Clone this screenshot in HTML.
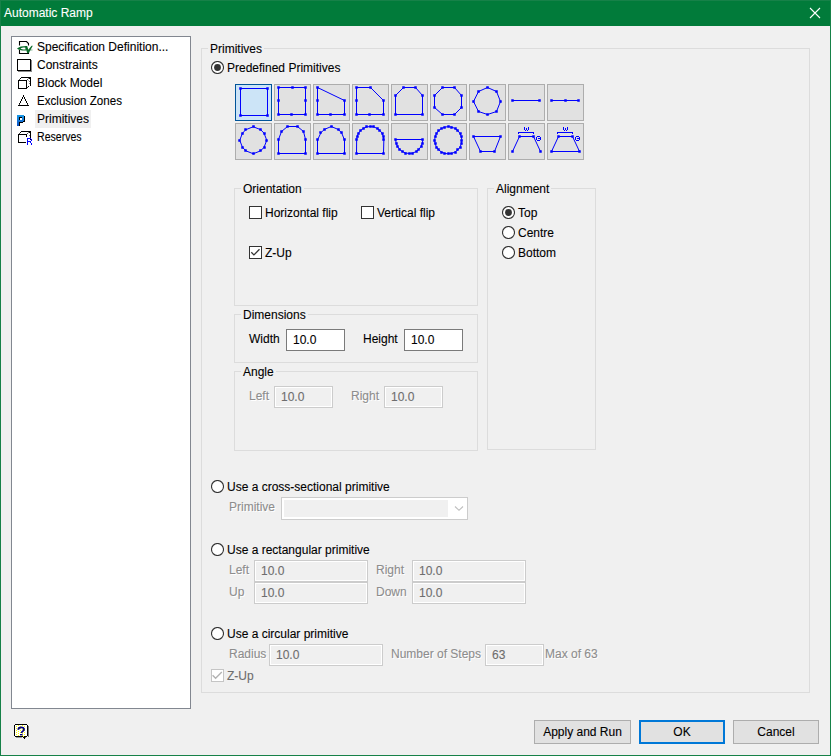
<!DOCTYPE html>
<html><head><meta charset="utf-8">
<style>
*{margin:0;padding:0;box-sizing:border-box}
html,body{width:831px;height:756px;overflow:hidden;background:#f0f0f0}
body{position:relative;font-family:"Liberation Sans",sans-serif;font-size:12px;line-height:12px;color:#000;-webkit-text-stroke:0.1px currentColor}
.a{position:absolute;white-space:nowrap}
#win{position:absolute;left:0;top:0;width:831px;height:756px;border:1px solid #168148;background:#f0f0f0}
#title{position:absolute;left:1px;top:1px;width:829px;height:25px;background:#017b3a}
.gb{position:absolute;border:1px solid #dcdcdc}
.lg{position:absolute;background:#f0f0f0;padding:0 2px;height:12px}
.cb{position:absolute;width:13px;height:13px;border:1px solid #333;background:#fff}
.rb{position:absolute;width:13px;height:13px}
.in{position:absolute;border:1px solid #7a7a7a;background:#fff;height:22px;padding:4px 0 0 6px}
.dis{color:#8d8d8d;text-shadow:1px 1px 0 #fff}
.ind{position:absolute;border:1px solid #cccccc;background:#f0f0f0;box-shadow:inset 0 0 0 1px #fff;height:22px;padding:4px 0 0 6px;color:#6d6d6d}
.btn{position:absolute;border:1px solid #adadad;background:#e1e1e1;height:24px;text-align:center;padding-top:5px}
.pb{position:absolute;width:37px;height:37px;border:1px solid #adadad;background:#e1e1e1}
.pb svg{position:absolute;left:-1px;top:-1px}
.pb.sel{border-color:#005499;background:#cce4f7}
</style></head><body>
<div id="win"></div>
<div id="title"></div>
<div class="a" style="left:4px;top:7px;color:#fff">Automatic Ramp</div>

<!-- sidebar -->
<div style="position:absolute;left:11px;top:36px;width:180px;height:673px;background:#fff;border:1px solid #828790"></div>
<div class="a" style="left:37px;top:41px">Specification Definition...</div>
<div class="a" style="left:37px;top:59px">Constraints</div>
<div class="a" style="left:37px;top:77px">Block Model</div>
<div class="a" style="left:37px;top:95px;transform:scaleX(0.965);transform-origin:0 0">Exclusion Zones</div>
<div style="position:absolute;left:35px;top:110px;width:56px;height:18px;background:#f0f0f0"></div>
<div class="a" style="left:37px;top:113px">Primitives</div>
<div class="a" style="left:37px;top:131px;transform:scaleX(0.88);transform-origin:0 0">Reserves</div>

<!-- primitives group -->
<div class="gb" style="left:201px;top:48px;width:609px;height:645px"></div>
<div class="lg" style="left:208px;top:43px">Primitives</div>
<svg class="rb" style="left:211px;top:61px" width="13" height="13" viewBox="0 0 13 13"><circle cx="6.5" cy="6.5" r="6" fill="#fff" stroke="#333" stroke-width="1.1"/><circle cx="6.5" cy="6.5" r="3.4" fill="#333"/></svg>
<div class="a" style="left:227px;top:62px">Predefined Primitives</div>

<div class="pb sel" style="left:235px;top:84px"><svg width="37" height="37" viewBox="0 0 37 37" style="left:-1px;top:-1px"><g transform="translate(1,1)"><polygon points="4.50,3.50 31.50,3.50 31.50,30.50 4.50,30.50" fill="none" stroke="#0000ff" stroke-width="1"/><rect x="3.25" y="2.25" width="2.5" height="2.5" fill="#0000ff"/><rect x="30.25" y="2.25" width="2.5" height="2.5" fill="#0000ff"/><rect x="30.25" y="29.25" width="2.5" height="2.5" fill="#0000ff"/><rect x="3.25" y="29.25" width="2.5" height="2.5" fill="#0000ff"/></g></svg></div>
<div class="pb" style="left:274px;top:84px"><svg width="37" height="37" viewBox="0 0 37 37" style="left:-1px;top:-1px"><g><polygon points="4.50,3.50 31.50,3.50 31.50,30.50 4.50,30.50" fill="none" stroke="#0000ff" stroke-width="1"/><rect x="3.25" y="2.25" width="2.5" height="2.5" fill="#0000ff"/><rect x="17.25" y="2.25" width="2.5" height="2.5" fill="#0000ff"/><rect x="30.25" y="2.25" width="2.5" height="2.5" fill="#0000ff"/><rect x="30.25" y="15.25" width="2.5" height="2.5" fill="#0000ff"/><rect x="30.25" y="29.25" width="2.5" height="2.5" fill="#0000ff"/><rect x="16.25" y="29.25" width="2.5" height="2.5" fill="#0000ff"/><rect x="3.25" y="29.25" width="2.5" height="2.5" fill="#0000ff"/><rect x="3.25" y="15.25" width="2.5" height="2.5" fill="#0000ff"/></g></svg></div>
<div class="pb" style="left:313px;top:84px"><svg width="37" height="37" viewBox="0 0 37 37" style="left:-1px;top:-1px"><g><polygon points="4.50,3.50 31.50,16.50 31.50,30.50 4.50,30.50" fill="none" stroke="#0000ff" stroke-width="1"/><rect x="3.25" y="2.25" width="2.5" height="2.5" fill="#0000ff"/><rect x="30.25" y="15.25" width="2.5" height="2.5" fill="#0000ff"/><rect x="30.25" y="29.25" width="2.5" height="2.5" fill="#0000ff"/><rect x="16.25" y="29.25" width="2.5" height="2.5" fill="#0000ff"/><rect x="3.25" y="29.25" width="2.5" height="2.5" fill="#0000ff"/><rect x="3.25" y="15.25" width="2.5" height="2.5" fill="#0000ff"/></g></svg></div>
<div class="pb" style="left:352px;top:84px"><svg width="37" height="37" viewBox="0 0 37 37" style="left:-1px;top:-1px"><g><polygon points="4.50,3.50 18.50,3.50 31.50,16.50 31.50,30.50 4.50,30.50" fill="none" stroke="#0000ff" stroke-width="1"/><rect x="3.25" y="2.25" width="2.5" height="2.5" fill="#0000ff"/><rect x="17.25" y="2.25" width="2.5" height="2.5" fill="#0000ff"/><rect x="30.25" y="15.25" width="2.5" height="2.5" fill="#0000ff"/><rect x="30.25" y="29.25" width="2.5" height="2.5" fill="#0000ff"/><rect x="16.25" y="29.25" width="2.5" height="2.5" fill="#0000ff"/><rect x="3.25" y="29.25" width="2.5" height="2.5" fill="#0000ff"/><rect x="3.25" y="15.25" width="2.5" height="2.5" fill="#0000ff"/></g></svg></div>
<div class="pb" style="left:391px;top:84px"><svg width="37" height="37" viewBox="0 0 37 37" style="left:-1px;top:-1px"><g><polygon points="4.50,11.50 12.50,3.50 24.50,3.50 31.50,11.50 31.50,30.50 4.50,30.50" fill="none" stroke="#0000ff" stroke-width="1"/><rect x="3.25" y="10.25" width="2.5" height="2.5" fill="#0000ff"/><rect x="11.25" y="2.25" width="2.5" height="2.5" fill="#0000ff"/><rect x="23.25" y="2.25" width="2.5" height="2.5" fill="#0000ff"/><rect x="30.25" y="10.25" width="2.5" height="2.5" fill="#0000ff"/><rect x="30.25" y="29.25" width="2.5" height="2.5" fill="#0000ff"/><rect x="3.25" y="29.25" width="2.5" height="2.5" fill="#0000ff"/></g></svg></div>
<div class="pb" style="left:430px;top:84px"><svg width="37" height="37" viewBox="0 0 37 37" style="left:-1px;top:-1px"><g><polygon points="12.50,3.50 24.50,3.50 31.50,11.50 31.50,23.50 24.50,30.50 12.50,30.50 4.50,23.50 4.50,11.50" fill="none" stroke="#0000ff" stroke-width="1"/><rect x="11.25" y="2.25" width="2.5" height="2.5" fill="#0000ff"/><rect x="23.25" y="2.25" width="2.5" height="2.5" fill="#0000ff"/><rect x="30.25" y="10.25" width="2.5" height="2.5" fill="#0000ff"/><rect x="30.25" y="22.25" width="2.5" height="2.5" fill="#0000ff"/><rect x="23.25" y="29.25" width="2.5" height="2.5" fill="#0000ff"/><rect x="11.25" y="29.25" width="2.5" height="2.5" fill="#0000ff"/><rect x="3.25" y="22.25" width="2.5" height="2.5" fill="#0000ff"/><rect x="3.25" y="10.25" width="2.5" height="2.5" fill="#0000ff"/></g></svg></div>
<div class="pb" style="left:469px;top:84px"><svg width="37" height="37" viewBox="0 0 37 37" style="left:-1px;top:-1px"><g><polygon points="18.50,3.50 27.50,7.50 31.50,17.50 27.50,27.50 18.50,30.50 9.50,27.50 4.50,17.50 9.50,7.50" fill="none" stroke="#0000ff" stroke-width="1"/><rect x="17.25" y="2.25" width="2.5" height="2.5" fill="#0000ff"/><rect x="26.25" y="6.25" width="2.5" height="2.5" fill="#0000ff"/><rect x="30.25" y="16.25" width="2.5" height="2.5" fill="#0000ff"/><rect x="26.25" y="26.25" width="2.5" height="2.5" fill="#0000ff"/><rect x="17.25" y="29.25" width="2.5" height="2.5" fill="#0000ff"/><rect x="8.25" y="26.25" width="2.5" height="2.5" fill="#0000ff"/><rect x="3.25" y="16.25" width="2.5" height="2.5" fill="#0000ff"/><rect x="8.25" y="6.25" width="2.5" height="2.5" fill="#0000ff"/></g></svg></div>
<div class="pb" style="left:508px;top:84px"><svg width="37" height="37" viewBox="0 0 37 37" style="left:-1px;top:-1px"><g><polyline points="4.50,16.50 31.50,16.50" fill="none" stroke="#0000ff" stroke-width="1"/><rect x="3.25" y="15.25" width="2.5" height="2.5" fill="#0000ff"/><rect x="30.25" y="15.25" width="2.5" height="2.5" fill="#0000ff"/></g></svg></div>
<div class="pb" style="left:547px;top:84px"><svg width="37" height="37" viewBox="0 0 37 37" style="left:-1px;top:-1px"><g><polyline points="4.50,16.50 31.50,16.50" fill="none" stroke="#0000ff" stroke-width="1"/><rect x="3.25" y="15.25" width="2.5" height="2.5" fill="#0000ff"/><rect x="17.25" y="15.25" width="2.5" height="2.5" fill="#0000ff"/><rect x="30.25" y="15.25" width="2.5" height="2.5" fill="#0000ff"/></g></svg></div>
<div class="pb" style="left:235px;top:123px"><svg width="37" height="37" viewBox="0 0 37 37" style="left:-1px;top:-1px"><g><polygon points="31.75,17.25 29.07,10.22 25.65,6.68 18.25,3.75 10.85,6.68 7.43,10.22 4.75,17.25 7.43,24.28 10.85,27.82 18.25,30.75 25.65,27.82 29.07,24.28" fill="none" stroke="#0000ff" stroke-width="1"/><rect x="30.25" y="16.25" width="2.5" height="2.5" fill="#0000ff"/><rect x="28.25" y="9.25" width="2.5" height="2.5" fill="#0000ff"/><rect x="24.25" y="5.25" width="2.5" height="2.5" fill="#0000ff"/><rect x="17.25" y="2.25" width="2.5" height="2.5" fill="#0000ff"/><rect x="9.25" y="5.25" width="2.5" height="2.5" fill="#0000ff"/><rect x="6.25" y="9.25" width="2.5" height="2.5" fill="#0000ff"/><rect x="3.25" y="16.25" width="2.5" height="2.5" fill="#0000ff"/><rect x="6.25" y="23.25" width="2.5" height="2.5" fill="#0000ff"/><rect x="9.25" y="26.25" width="2.5" height="2.5" fill="#0000ff"/><rect x="17.25" y="29.25" width="2.5" height="2.5" fill="#0000ff"/><rect x="24.25" y="26.25" width="2.5" height="2.5" fill="#0000ff"/><rect x="28.25" y="23.25" width="2.5" height="2.5" fill="#0000ff"/></g></svg></div>
<div class="pb" style="left:274px;top:123px"><svg width="37" height="37" viewBox="0 0 37 37" style="left:-1px;top:-1px"><g><polygon points="4.50,30.50 4.50,16.50 7.50,8.50 13.50,3.50 23.50,3.50 29.50,8.50 31.50,16.50 31.50,30.50" fill="none" stroke="#0000ff" stroke-width="1"/><rect x="3.25" y="29.25" width="2.5" height="2.5" fill="#0000ff"/><rect x="3.25" y="15.25" width="2.5" height="2.5" fill="#0000ff"/><rect x="6.25" y="7.25" width="2.5" height="2.5" fill="#0000ff"/><rect x="12.25" y="2.25" width="2.5" height="2.5" fill="#0000ff"/><rect x="22.25" y="2.25" width="2.5" height="2.5" fill="#0000ff"/><rect x="28.25" y="7.25" width="2.5" height="2.5" fill="#0000ff"/><rect x="30.25" y="15.25" width="2.5" height="2.5" fill="#0000ff"/><rect x="30.25" y="29.25" width="2.5" height="2.5" fill="#0000ff"/></g></svg></div>
<div class="pb" style="left:313px;top:123px"><svg width="37" height="37" viewBox="0 0 37 37" style="left:-1px;top:-1px"><g><polygon points="4.50,30.50 4.50,17.00 7.90,9.80 11.20,6.50 18.25,3.50 25.30,6.50 28.60,9.80 31.50,17.00 31.50,30.50" fill="none" stroke="#0000ff" stroke-width="1"/><rect x="3.25" y="29.25" width="2.5" height="2.5" fill="#0000ff"/><rect x="3.25" y="15.25" width="2.5" height="2.5" fill="#0000ff"/><rect x="6.25" y="8.25" width="2.5" height="2.5" fill="#0000ff"/><rect x="10.25" y="5.25" width="2.5" height="2.5" fill="#0000ff"/><rect x="17.25" y="2.25" width="2.5" height="2.5" fill="#0000ff"/><rect x="24.25" y="5.25" width="2.5" height="2.5" fill="#0000ff"/><rect x="27.25" y="8.25" width="2.5" height="2.5" fill="#0000ff"/><rect x="30.25" y="15.25" width="2.5" height="2.5" fill="#0000ff"/><rect x="30.25" y="29.25" width="2.5" height="2.5" fill="#0000ff"/></g></svg></div>
<div class="pb" style="left:352px;top:123px"><svg width="37" height="37" viewBox="0 0 37 37" style="left:-1px;top:-1px"><g><polygon points="4.50,30.50 4.65,17.00 5.11,13.51 6.47,10.25 8.63,7.45 11.45,5.31 14.73,3.96 18.25,3.50 21.77,3.96 25.05,5.31 27.87,7.45 30.03,10.25 31.39,13.51 31.85,17.00 31.50,30.50" fill="none" stroke="#0000ff" stroke-width="1"/><rect x="3.25" y="29.25" width="2.5" height="2.5" fill="#0000ff"/><rect x="3.25" y="15.25" width="2.5" height="2.5" fill="#0000ff"/><rect x="4.25" y="12.25" width="2.5" height="2.5" fill="#0000ff"/><rect x="5.25" y="9.25" width="2.5" height="2.5" fill="#0000ff"/><rect x="7.25" y="6.25" width="2.5" height="2.5" fill="#0000ff"/><rect x="10.25" y="4.25" width="2.5" height="2.5" fill="#0000ff"/><rect x="13.25" y="2.25" width="2.5" height="2.5" fill="#0000ff"/><rect x="17.25" y="2.25" width="2.5" height="2.5" fill="#0000ff"/><rect x="20.25" y="2.25" width="2.5" height="2.5" fill="#0000ff"/><rect x="24.25" y="4.25" width="2.5" height="2.5" fill="#0000ff"/><rect x="26.25" y="6.25" width="2.5" height="2.5" fill="#0000ff"/><rect x="29.25" y="9.25" width="2.5" height="2.5" fill="#0000ff"/><rect x="30.25" y="12.25" width="2.5" height="2.5" fill="#0000ff"/><rect x="30.25" y="15.25" width="2.5" height="2.5" fill="#0000ff"/><rect x="30.25" y="29.25" width="2.5" height="2.5" fill="#0000ff"/></g></svg></div>
<div class="pb" style="left:391px;top:123px"><svg width="37" height="37" viewBox="0 0 37 37" style="left:-1px;top:-1px"><g><polygon points="4.65,16.50 5.11,20.12 6.47,23.50 8.63,26.40 11.45,28.62 14.73,30.02 18.25,30.50 21.77,30.02 25.05,28.62 27.87,26.40 30.03,23.50 31.39,20.12 31.85,16.50" fill="none" stroke="#0000ff" stroke-width="1"/><rect x="3.25" y="15.25" width="2.5" height="2.5" fill="#0000ff"/><rect x="4.25" y="19.25" width="2.5" height="2.5" fill="#0000ff"/><rect x="5.25" y="22.25" width="2.5" height="2.5" fill="#0000ff"/><rect x="7.25" y="25.25" width="2.5" height="2.5" fill="#0000ff"/><rect x="10.25" y="27.25" width="2.5" height="2.5" fill="#0000ff"/><rect x="13.25" y="29.25" width="2.5" height="2.5" fill="#0000ff"/><rect x="17.25" y="29.25" width="2.5" height="2.5" fill="#0000ff"/><rect x="20.25" y="29.25" width="2.5" height="2.5" fill="#0000ff"/><rect x="24.25" y="27.25" width="2.5" height="2.5" fill="#0000ff"/><rect x="26.25" y="25.25" width="2.5" height="2.5" fill="#0000ff"/><rect x="29.25" y="22.25" width="2.5" height="2.5" fill="#0000ff"/><rect x="30.25" y="19.25" width="2.5" height="2.5" fill="#0000ff"/><rect x="30.25" y="15.25" width="2.5" height="2.5" fill="#0000ff"/></g></svg></div>
<div class="pb" style="left:430px;top:123px"><svg width="37" height="37" viewBox="0 0 37 37" style="left:-1px;top:-1px"><g><polygon points="18.25,3.65 21.77,4.11 25.05,5.47 27.87,7.63 30.03,10.45 31.39,13.73 31.85,17.25 31.39,20.77 30.03,24.05 27.87,26.87 25.05,29.03 21.77,30.39 18.25,30.85 14.73,30.39 11.45,29.03 8.63,26.87 6.47,24.05 5.11,20.77 4.65,17.25 5.11,13.73 6.47,10.45 8.63,7.63 11.45,5.47 14.73,4.11" fill="none" stroke="#0000ff" stroke-width="1"/><rect x="17.25" y="2.25" width="2.5" height="2.5" fill="#0000ff"/><rect x="20.25" y="3.25" width="2.5" height="2.5" fill="#0000ff"/><rect x="24.25" y="4.25" width="2.5" height="2.5" fill="#0000ff"/><rect x="26.25" y="6.25" width="2.5" height="2.5" fill="#0000ff"/><rect x="29.25" y="9.25" width="2.5" height="2.5" fill="#0000ff"/><rect x="30.25" y="12.25" width="2.5" height="2.5" fill="#0000ff"/><rect x="30.25" y="16.25" width="2.5" height="2.5" fill="#0000ff"/><rect x="30.25" y="19.25" width="2.5" height="2.5" fill="#0000ff"/><rect x="29.25" y="23.25" width="2.5" height="2.5" fill="#0000ff"/><rect x="26.25" y="25.25" width="2.5" height="2.5" fill="#0000ff"/><rect x="24.25" y="28.25" width="2.5" height="2.5" fill="#0000ff"/><rect x="20.25" y="29.25" width="2.5" height="2.5" fill="#0000ff"/><rect x="17.25" y="29.25" width="2.5" height="2.5" fill="#0000ff"/><rect x="13.25" y="29.25" width="2.5" height="2.5" fill="#0000ff"/><rect x="10.25" y="28.25" width="2.5" height="2.5" fill="#0000ff"/><rect x="7.25" y="25.25" width="2.5" height="2.5" fill="#0000ff"/><rect x="5.25" y="23.25" width="2.5" height="2.5" fill="#0000ff"/><rect x="4.25" y="19.25" width="2.5" height="2.5" fill="#0000ff"/><rect x="3.25" y="16.25" width="2.5" height="2.5" fill="#0000ff"/><rect x="4.25" y="12.25" width="2.5" height="2.5" fill="#0000ff"/><rect x="5.25" y="9.25" width="2.5" height="2.5" fill="#0000ff"/><rect x="7.25" y="6.25" width="2.5" height="2.5" fill="#0000ff"/><rect x="10.25" y="4.25" width="2.5" height="2.5" fill="#0000ff"/><rect x="13.25" y="3.25" width="2.5" height="2.5" fill="#0000ff"/></g></svg></div>
<div class="pb" style="left:469px;top:123px"><svg width="37" height="37" viewBox="0 0 37 37" style="left:-1px;top:-1px"><g><polygon points="4.50,13.50 31.50,13.50 25.50,28.50 11.50,28.50" fill="none" stroke="#0000ff" stroke-width="1"/><rect x="3.25" y="12.25" width="2.5" height="2.5" fill="#0000ff"/><rect x="30.25" y="12.25" width="2.5" height="2.5" fill="#0000ff"/><rect x="24.25" y="27.25" width="2.5" height="2.5" fill="#0000ff"/><rect x="10.25" y="27.25" width="2.5" height="2.5" fill="#0000ff"/></g></svg></div>
<div class="pb" style="left:508px;top:123px"><svg width="37" height="37" viewBox="0 0 37 37" style="left:-1px;top:-1px"><g><polyline points="4.50,28.50 11.50,13.50 25.50,13.50 32.50,28.50" fill="none" stroke="#0000ff" stroke-width="1"/><rect x="3.25" y="27.25" width="2.5" height="2.5" fill="#0000ff"/><rect x="10.25" y="12.25" width="2.5" height="2.5" fill="#0000ff"/><rect x="24.25" y="12.25" width="2.5" height="2.5" fill="#0000ff"/><rect x="31.25" y="27.25" width="2.5" height="2.5" fill="#0000ff"/><g shape-rendering="crispEdges"><rect x="16" y="4" width="1" height="1" fill="#0000ff"/><rect x="20" y="4" width="1" height="1" fill="#0000ff"/><rect x="16" y="5" width="1" height="1" fill="#0000ff"/><rect x="18" y="5" width="1" height="1" fill="#0000ff"/><rect x="20" y="5" width="1" height="1" fill="#0000ff"/><rect x="16" y="6" width="1" height="1" fill="#0000ff"/><rect x="18" y="6" width="1" height="1" fill="#0000ff"/><rect x="20" y="6" width="1" height="1" fill="#0000ff"/><rect x="17" y="7" width="1" height="1" fill="#0000ff"/><rect x="19" y="7" width="1" height="1" fill="#0000ff"/><rect x="29" y="13" width="1" height="1" fill="#0000ff"/><rect x="30" y="13" width="1" height="1" fill="#0000ff"/><rect x="31" y="13" width="1" height="1" fill="#0000ff"/><rect x="28" y="14" width="1" height="1" fill="#0000ff"/><rect x="32" y="14" width="1" height="1" fill="#0000ff"/><rect x="28" y="15" width="1" height="1" fill="#0000ff"/><rect x="30" y="15" width="1" height="1" fill="#0000ff"/><rect x="31" y="15" width="1" height="1" fill="#0000ff"/><rect x="32" y="15" width="1" height="1" fill="#0000ff"/><rect x="28" y="16" width="1" height="1" fill="#0000ff"/><rect x="32" y="16" width="1" height="1" fill="#0000ff"/><rect x="29" y="17" width="1" height="1" fill="#0000ff"/><rect x="30" y="17" width="1" height="1" fill="#0000ff"/><rect x="31" y="17" width="1" height="1" fill="#0000ff"/><rect x="10" y="9" width="16" height="1" fill="#0000ff"/><rect x="10" y="10" width="1" height="1" fill="#0000ff"/><rect x="25" y="10" width="1" height="1" fill="#0000ff"/></g></g></svg></div>
<div class="pb" style="left:547px;top:123px"><svg width="37" height="37" viewBox="0 0 37 37" style="left:-1px;top:-1px"><g><polygon points="4.50,28.50 11.50,13.50 25.50,13.50 32.50,28.50" fill="none" stroke="#0000ff" stroke-width="1"/><rect x="3.25" y="27.25" width="2.5" height="2.5" fill="#0000ff"/><rect x="10.25" y="12.25" width="2.5" height="2.5" fill="#0000ff"/><rect x="24.25" y="12.25" width="2.5" height="2.5" fill="#0000ff"/><rect x="31.25" y="27.25" width="2.5" height="2.5" fill="#0000ff"/><g shape-rendering="crispEdges"><rect x="16" y="4" width="1" height="1" fill="#0000ff"/><rect x="20" y="4" width="1" height="1" fill="#0000ff"/><rect x="16" y="5" width="1" height="1" fill="#0000ff"/><rect x="18" y="5" width="1" height="1" fill="#0000ff"/><rect x="20" y="5" width="1" height="1" fill="#0000ff"/><rect x="16" y="6" width="1" height="1" fill="#0000ff"/><rect x="18" y="6" width="1" height="1" fill="#0000ff"/><rect x="20" y="6" width="1" height="1" fill="#0000ff"/><rect x="17" y="7" width="1" height="1" fill="#0000ff"/><rect x="19" y="7" width="1" height="1" fill="#0000ff"/><rect x="29" y="13" width="1" height="1" fill="#0000ff"/><rect x="30" y="13" width="1" height="1" fill="#0000ff"/><rect x="31" y="13" width="1" height="1" fill="#0000ff"/><rect x="28" y="14" width="1" height="1" fill="#0000ff"/><rect x="32" y="14" width="1" height="1" fill="#0000ff"/><rect x="28" y="15" width="1" height="1" fill="#0000ff"/><rect x="30" y="15" width="1" height="1" fill="#0000ff"/><rect x="31" y="15" width="1" height="1" fill="#0000ff"/><rect x="32" y="15" width="1" height="1" fill="#0000ff"/><rect x="28" y="16" width="1" height="1" fill="#0000ff"/><rect x="32" y="16" width="1" height="1" fill="#0000ff"/><rect x="29" y="17" width="1" height="1" fill="#0000ff"/><rect x="30" y="17" width="1" height="1" fill="#0000ff"/><rect x="31" y="17" width="1" height="1" fill="#0000ff"/><rect x="10" y="9" width="16" height="1" fill="#0000ff"/><rect x="10" y="10" width="1" height="1" fill="#0000ff"/><rect x="25" y="10" width="1" height="1" fill="#0000ff"/></g></g></svg></div>

<!-- orientation -->
<div class="gb" style="left:234px;top:188px;width:244px;height:118px"></div>
<div class="lg" style="left:241px;top:183px">Orientation</div>
<div class="cb" style="left:249px;top:206px"></div>
<div class="a" style="left:265px;top:207px">Horizontal flip</div>
<div class="cb" style="left:361px;top:206px"></div>
<div class="a" style="left:377px;top:207px">Vertical flip</div>
<div class="cb" style="left:249px;top:246px"></div>
<div class="a" style="left:265px;top:247px">Z-Up</div>

<!-- alignment -->
<div class="gb" style="left:487px;top:188px;width:109px;height:262px"></div>
<div class="lg" style="left:494px;top:183px">Alignment</div>
<svg class="rb" style="left:502px;top:206px" width="13" height="13" viewBox="0 0 13 13"><circle cx="6.5" cy="6.5" r="6" fill="#fff" stroke="#333" stroke-width="1.1"/><circle cx="6.5" cy="6.5" r="3.4" fill="#333"/></svg>
<div class="a" style="left:518px;top:207px">Top</div>
<svg class="rb" style="left:502px;top:226px" width="13" height="13" viewBox="0 0 13 13"><circle cx="6.5" cy="6.5" r="6" fill="#fff" stroke="#333" stroke-width="1.1"/></svg>
<div class="a" style="left:518px;top:227px">Centre</div>
<svg class="rb" style="left:502px;top:246px" width="13" height="13" viewBox="0 0 13 13"><circle cx="6.5" cy="6.5" r="6" fill="#fff" stroke="#333" stroke-width="1.1"/></svg>
<div class="a" style="left:518px;top:247px">Bottom</div>

<!-- dimensions -->
<div class="gb" style="left:234px;top:314px;width:244px;height:49px"></div>
<div class="lg" style="left:241px;top:309px">Dimensions</div>
<div class="a" style="left:249px;top:333px">Width</div>
<div class="in" style="left:286px;top:329px;width:59px">10.0</div>
<div class="a" style="left:363px;top:333px">Height</div>
<div class="in" style="left:404px;top:329px;width:59px">10.0</div>

<!-- angle -->
<div class="gb" style="left:234px;top:371px;width:244px;height:80px"></div>
<div class="lg" style="left:241px;top:366px">Angle</div>
<div class="a dis" style="left:249px;top:390px">Left</div>
<div class="ind" style="left:274px;top:386px;width:59px">10.0</div>
<div class="a dis" style="left:351px;top:390px">Right</div>
<div class="ind" style="left:384px;top:386px;width:59px">10.0</div>

<!-- cross-section -->
<svg class="rb" style="left:211px;top:480px" width="13" height="13" viewBox="0 0 13 13"><circle cx="6.5" cy="6.5" r="6" fill="#fff" stroke="#333" stroke-width="1.1"/></svg>
<div class="a" style="left:227px;top:481px">Use a cross-sectional primitive</div>
<div class="a dis" style="left:229px;top:501px">Primitive</div>


<!-- rectangular -->
<svg class="rb" style="left:211px;top:543px" width="13" height="13" viewBox="0 0 13 13"><circle cx="6.5" cy="6.5" r="6" fill="#fff" stroke="#333" stroke-width="1.1"/></svg>
<div class="a" style="left:227px;top:544px">Use a rectangular primitive</div>
<div class="a dis" style="left:229px;top:564px">Left</div>
<div class="ind" style="left:254px;top:560px;width:114px">10.0</div>
<div class="a dis" style="left:376px;top:564px">Right</div>
<div class="ind" style="left:412px;top:560px;width:114px">10.0</div>
<div class="a dis" style="left:229px;top:586px">Up</div>
<div class="ind" style="left:254px;top:582px;width:114px">10.0</div>
<div class="a dis" style="left:376px;top:586px">Down</div>
<div class="ind" style="left:412px;top:582px;width:114px">10.0</div>

<!-- circular -->
<svg class="rb" style="left:211px;top:627px" width="13" height="13" viewBox="0 0 13 13"><circle cx="6.5" cy="6.5" r="6" fill="#fff" stroke="#333" stroke-width="1.1"/></svg>
<div class="a" style="left:227px;top:628px">Use a circular primitive</div>
<div class="a dis" style="left:229px;top:648px">Radius</div>
<div class="ind" style="left:269px;top:644px;width:114px">10.0</div>
<div class="a dis" style="left:391px;top:648px">Number of Steps</div>
<div class="ind" style="left:485px;top:644px;width:59px">63</div>
<div class="a dis" style="left:545px;top:648px">Max of 63</div>
<div class="cb" style="left:211px;top:669px;border-color:#c5c5c5;background:#fff"></div>
<div class="a" style="left:227px;top:670px;color:#6d6d6d">Z-Up</div>

<!-- buttons -->
<div class="btn" style="left:534px;top:720px;width:97px">Apply and Run</div>
<div class="btn" style="left:639px;top:720px;width:86px;border:2px solid #0078d7;padding-top:4px">OK</div>
<div class="btn" style="left:733px;top:720px;width:86px">Cancel</div>

<!-- close X -->
<svg class="a" style="left:809px;top:7px" width="12" height="12" viewBox="0 0 12 12"><path d="M1 1L11 11M11 1L1 11" stroke="#fff" stroke-width="1.1"/></svg>
<!-- sidebar icons -->
<svg class="a" style="left:16px;top:40px" width="18" height="16" viewBox="0 0 18 16">
 <path d="M3.5 5.5V1.5H10.5L12.5 3.5V5.5M3.5 10V13.5H12.5V10" fill="none" stroke="#000" stroke-width="1.1"/>
 <path d="M1 8.5C3 6.8 6 6 10.5 6L10.5 10.5C6 10.8 3 10.2 1 8.5ZM4.5 8.5C6 9.5 8 9.6 9.5 9.4L9.5 7.6C8 7.4 6 7.5 4.5 8.5Z" fill="#0a6b2a" fill-rule="evenodd"/>
 <path d="M9 6H11.2L12.3 9.8L15.6 5.8H16.8L12.8 13H11.2Z" fill="#0a6b2a"/>
 <path d="M14 10L16.5 10" stroke="#0a6b2a" stroke-width="0.8" opacity="0.6"/>
</svg>
<svg class="a" style="left:16px;top:58px" width="16" height="15" viewBox="0 0 16 15" shape-rendering="crispEdges"><rect x="2" y="13" width="13" height="1" fill="#888"/><rect x="15" y="2" width="1" height="12" fill="#888"/><rect x="1" y="1" width="14" height="12" fill="#fff"/><rect x="1" y="1" width="14" height="1" fill="#000"/><rect x="1" y="12" width="14" height="1" fill="#000"/><rect x="1" y="1" width="1" height="12" fill="#000"/><rect x="14" y="1" width="1" height="12" fill="#000"/></svg>
<svg class="a" style="left:16px;top:75px" width="16" height="16" viewBox="0 0 16 16" shape-rendering="crispEdges"><rect x="5" y="2" width="10" height="1" fill="#000"/><rect x="14" y="2" width="1" height="9" fill="#000"/><rect x="13" y="3" width="1" height="1" fill="#000"/><rect x="4" y="3" width="1" height="1" fill="#000"/><rect x="3" y="4" width="1" height="1" fill="#444"/><rect x="11" y="4" width="1" height="1" fill="#555"/><rect x="12" y="3" width="1" height="1" fill="#888"/><rect x="13" y="6" width="1" height="1" fill="#777"/><rect x="13" y="8" width="1" height="1" fill="#777"/><rect x="12" y="11" width="1" height="1" fill="#000"/><rect x="11" y="12" width="1" height="1" fill="#333"/><rect x="12" y="5" width="1" height="1" fill="#bbb"/><rect x="2" y="5" width="9" height="1" fill="#000"/><rect x="2" y="13" width="9" height="1" fill="#000"/><rect x="2" y="5" width="1" height="9" fill="#000"/><rect x="10" y="5" width="1" height="9" fill="#000"/></svg>
<svg class="a" style="left:16px;top:93px" width="16" height="15" viewBox="0 0 16 15" shape-rendering="crispEdges"><rect x="7" y="2" width="1" height="1" fill="#000"/><rect x="7" y="2" width="1" height="1" fill="#000"/><rect x="7" y="3" width="1" height="1" fill="#000"/><rect x="7" y="3" width="1" height="1" fill="#000"/><rect x="6" y="4" width="1" height="1" fill="#000"/><rect x="8" y="4" width="1" height="1" fill="#000"/><rect x="6" y="5" width="1" height="1" fill="#000"/><rect x="8" y="5" width="1" height="1" fill="#000"/><rect x="5" y="6" width="1" height="1" fill="#000"/><rect x="9" y="6" width="1" height="1" fill="#000"/><rect x="5" y="7" width="1" height="1" fill="#000"/><rect x="9" y="7" width="1" height="1" fill="#000"/><rect x="4" y="8" width="1" height="1" fill="#000"/><rect x="10" y="8" width="1" height="1" fill="#000"/><rect x="4" y="9" width="1" height="1" fill="#000"/><rect x="10" y="9" width="1" height="1" fill="#000"/><rect x="3" y="10" width="1" height="1" fill="#000"/><rect x="11" y="10" width="1" height="1" fill="#000"/><rect x="3" y="11" width="1" height="1" fill="#000"/><rect x="11" y="11" width="1" height="1" fill="#000"/><rect x="2" y="12" width="1" height="1" fill="#000"/><rect x="12" y="12" width="1" height="1" fill="#000"/><rect x="2" y="12" width="11" height="1" fill="#000"/><rect x="3" y="11" width="1" height="1" fill="#444"/><rect x="11" y="11" width="1" height="1" fill="#444"/></svg>
<svg class="a" style="left:16px;top:113px" width="12" height="14" viewBox="0 0 12 14" shape-rendering="crispEdges"><defs><linearGradient id="pg" gradientUnits="userSpaceOnUse" x1="0" y1="2" x2="0" y2="13"><stop offset="0" stop-color="#1a9be8"/><stop offset="1" stop-color="#0a4fc4"/></linearGradient></defs><rect x="1" y="2" width="2" height="11" fill="url(#pg)"/><rect x="1" y="2" width="7" height="2" fill="url(#pg)"/><rect x="6" y="2" width="2" height="7" fill="url(#pg)"/><rect x="1" y="7" width="7" height="2" fill="url(#pg)"/><rect x="4" y="5" width="2" height="2" fill="#fff"/><rect x="3" y="4" width="1" height="3" fill="#000"/><rect x="3" y="4" width="3" height="1" fill="#000"/><rect x="8" y="3" width="1" height="6" fill="#000"/><rect x="3" y="9" width="4" height="1" fill="#000"/><rect x="7" y="8" width="1" height="1" fill="#000"/><rect x="3" y="9" width="1" height="4" fill="#000"/></svg>
<svg class="a" style="left:16px;top:128px" width="18" height="18" viewBox="0 0 18 18"><g shape-rendering="crispEdges"><rect x="5" y="3" width="10" height="1" fill="#000"/><rect x="14" y="3" width="1" height="9" fill="#000"/><rect x="13" y="4" width="1" height="1" fill="#000"/><rect x="4" y="4" width="1" height="1" fill="#000"/><rect x="3" y="5" width="1" height="1" fill="#444"/><rect x="11" y="5" width="1" height="1" fill="#555"/><rect x="12" y="4" width="1" height="1" fill="#888"/><rect x="13" y="7" width="1" height="1" fill="#777"/><rect x="2" y="6" width="9" height="1" fill="#000"/><rect x="2" y="6" width="1" height="9" fill="#000"/><rect x="2" y="14" width="8" height="1" fill="#000"/><rect x="10" y="6" width="1" height="3" fill="#000"/></g><g fill="#0000ff" shape-rendering="crispEdges"><rect x="11" y="10" width="1" height="1"/><rect x="12" y="10" width="1" height="1"/><rect x="13" y="10" width="1" height="1"/><rect x="14" y="10" width="1" height="1"/><rect x="11" y="11" width="1" height="1"/><rect x="15" y="11" width="1" height="1"/><rect x="11" y="12" width="1" height="1"/><rect x="15" y="12" width="1" height="1"/><rect x="11" y="13" width="1" height="1"/><rect x="12" y="13" width="1" height="1"/><rect x="13" y="13" width="1" height="1"/><rect x="14" y="13" width="1" height="1"/><rect x="11" y="14" width="1" height="1"/><rect x="14" y="14" width="1" height="1"/><rect x="11" y="15" width="1" height="1"/><rect x="15" y="15" width="1" height="1"/><rect x="11" y="16" width="1" height="1"/><rect x="15" y="16" width="1" height="1"/></g></svg>
<!-- help icon -->
<svg class="a" style="left:13px;top:723px" width="18" height="19" viewBox="0 0 18 19" shape-rendering="crispEdges"><rect x="15" y="3" width="1" height="11" fill="#7a7a7a"/><rect x="3" y="14" width="6" height="1" fill="#9a9a9a"/><rect x="2" y="2" width="12" height="11" fill="#fff"/><rect x="2" y="1" width="12" height="1" fill="#000"/><rect x="1" y="2" width="1" height="11" fill="#000"/><rect x="14" y="2" width="1" height="11" fill="#000"/><rect x="2" y="13" width="7" height="1" fill="#000"/><rect x="12" y="13" width="2" height="1" fill="#000"/><rect x="3" y="3" width="1" height="1" fill="#ffff00"/><rect x="3" y="5" width="1" height="1" fill="#ffff00"/><rect x="3" y="7" width="1" height="1" fill="#ffff00"/><rect x="3" y="9" width="1" height="1" fill="#ffff00"/><rect x="3" y="11" width="1" height="1" fill="#ffff00"/><rect x="5" y="2" width="1" height="1" fill="#ffff00"/><rect x="5" y="4" width="1" height="1" fill="#ffff00"/><rect x="5" y="6" width="1" height="1" fill="#ffff00"/><rect x="5" y="8" width="1" height="1" fill="#ffff00"/><rect x="5" y="10" width="1" height="1" fill="#ffff00"/><rect x="5" y="12" width="1" height="1" fill="#ffff00"/><rect x="7" y="3" width="1" height="1" fill="#ffff00"/><rect x="7" y="5" width="1" height="1" fill="#ffff00"/><rect x="7" y="7" width="1" height="1" fill="#ffff00"/><rect x="7" y="9" width="1" height="1" fill="#ffff00"/><rect x="7" y="11" width="1" height="1" fill="#ffff00"/><rect x="9" y="2" width="1" height="1" fill="#ffff00"/><rect x="9" y="4" width="1" height="1" fill="#ffff00"/><rect x="9" y="6" width="1" height="1" fill="#ffff00"/><rect x="9" y="8" width="1" height="1" fill="#ffff00"/><rect x="9" y="10" width="1" height="1" fill="#ffff00"/><rect x="9" y="12" width="1" height="1" fill="#ffff00"/><rect x="11" y="3" width="1" height="1" fill="#ffff00"/><rect x="11" y="5" width="1" height="1" fill="#ffff00"/><rect x="11" y="7" width="1" height="1" fill="#ffff00"/><rect x="11" y="9" width="1" height="1" fill="#ffff00"/><rect x="11" y="11" width="1" height="1" fill="#ffff00"/><rect x="9" y="13" width="1" height="1" fill="#000"/><rect x="10" y="14" width="1" height="1" fill="#000"/><rect x="11" y="13" width="1" height="3" fill="#000"/><rect x="10" y="13" width="1" height="1" fill="#ffff00"/><rect x="12" y="14" width="1" height="1" fill="#666"/><g shape-rendering="auto"><path d="M5.3 6.8C5.3 5.1 6.6 4.3 8.2 4.3C9.8 4.3 11 5 11 6.4C11 8 8.8 8.1 8.4 10" fill="none" stroke="#000080" stroke-width="1.8"/><rect x="7" y="11" width="2.6" height="1.4" fill="#000080"/></g></svg>
<!-- Z-Up check -->
<svg class="a" style="left:249px;top:246px" width="13" height="13" viewBox="0 0 13 13"><path d="M2.3 6.3L4.9 8.9L10.5 3.3" fill="none" stroke="#333" stroke-width="1.3"/></svg>
<svg class="a" style="left:211px;top:669px" width="13" height="13" viewBox="0 0 13 13"><path d="M1.6 6.2L4.6 9.2L10.8 3" fill="none" stroke="#b3b3b3" stroke-width="1.4"/></svg>
<!-- combobox -->
<div style="position:absolute;left:281px;top:497px;width:187px;height:23px;border:1px solid #cccccc;background:#fff"></div>
<div style="position:absolute;left:284px;top:500px;width:164px;height:17px;background:#f0f0f0"></div>
<svg class="a" style="left:454px;top:505px" width="10" height="7" viewBox="0 0 10 7"><path d="M1 1.5L5 5.3L9 1.5" fill="none" stroke="#bfbfbf" stroke-width="1.1"/></svg>
</body></html>
